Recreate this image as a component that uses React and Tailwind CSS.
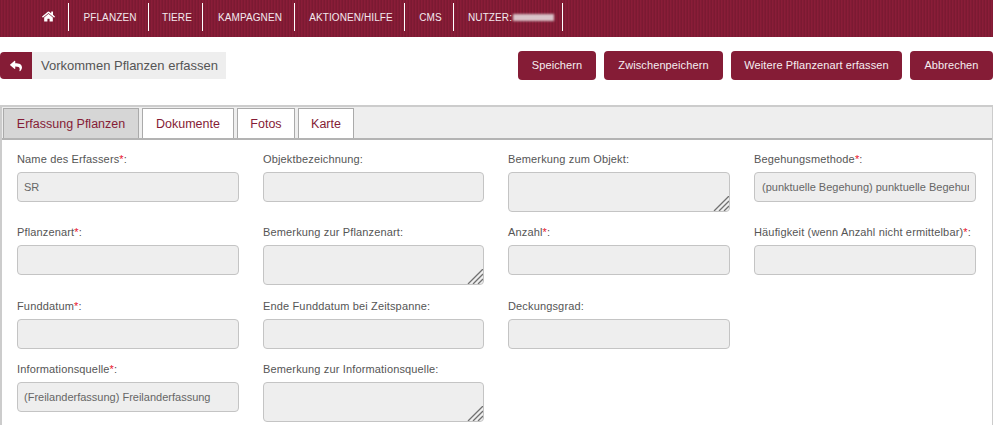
import { FaHome, FaReply } from 'react-icons/fa';

const navItems = [
  { label: 'PFLANZEN', width: 'w-[80px]' },
  { label: 'TIERE', width: 'w-[54px]' },
  { label: 'KAMPAGNEN', width: 'w-[92px]' },
  { label: 'AKTIONEN/HILFE', width: 'w-[110px]' },
  { label: 'CMS', width: 'w-[49px]' },
];

const buttons = [
  { label: 'Speichern', width: 'w-[78px]' },
  { label: 'Zwischenpeichern', width: 'w-[119px]' },
  { label: 'Weitere Pflanzenart erfassen', width: 'w-[171px]' },
  { label: 'Abbrechen', width: 'w-[83px]' },
];

const tabs = [
  { label: 'Erfassung Pflanzen', width: 'w-[136px]', active: true },
  { label: 'Dokumente', width: 'w-[92px]' },
  { label: 'Fotos', width: 'w-[58px]' },
  { label: 'Karte', width: 'w-[56px]' },
];

const fields = [
  { label: 'Name des Erfassers', required: true, value: 'SR' },
  { label: 'Objektbezeichnung' },
  { label: 'Bemerkung zum Objekt', multiline: true },
  { label: 'Begehungsmethode', required: true, value: '(punktuelle Begehung) punktuelle Begehung', inset: true },
  { label: 'Pflanzenart', required: true },
  { label: 'Bemerkung zur Pflanzenart', multiline: true },
  { label: 'Anzahl', required: true },
  { label: 'Häufigkeit (wenn Anzahl nicht ermittelbar)', required: true },
  { label: 'Funddatum', required: true },
  { label: 'Ende Funddatum bei Zeitspanne' },
  { label: 'Deckungsgrad' },
  null,
  { label: 'Informationsquelle', required: true, value: '(Freilanderfassung) Freilanderfassung' },
  { label: 'Bemerkung zur Informationsquelle', multiline: true },
];

function ResizeGrip() {
  return (
    <svg
      viewBox="0 0 16 15"
      className="pointer-events-none absolute bottom-[1px] right-[1px] h-[15px] w-[16px]"
      stroke="#707070"
      strokeWidth="1.3"
    >
      <path d="M1 15 16 0M6 15 16 5M11 15l5-5" />
    </svg>
  );
}

function Field({ field }) {
  if (!field) return <div />;
  const boxClass =
    'block w-full rounded-[4px] border border-[#c4c4c4] bg-[#eeeeee] text-[11px] text-[#666666] outline-none';

  return (
    <div>
      <label className="block h-[21px] whitespace-nowrap text-[11px] leading-[16px] tracking-[0.15px] text-[#555555]">
        {field.label}
        {field.required && <span className="text-[#e8112d]">*</span>}:
      </label>
      {field.multiline ? (
        <div className="relative">
          <textarea readOnly className={`${boxClass} h-[40px] resize-none px-[6px] py-[6px]`} />
          <ResizeGrip />
        </div>
      ) : (
        <input
          readOnly
          value={field.value || ''}
          className={`${boxClass} h-[30px] pr-[6px] ${field.inset ? 'pl-[7px]' : 'pl-[6px]'}`}
        />
      )}
    </div>
  );
}

export default function App() {
  return (
    <main className="h-[425px] overflow-hidden bg-white font-['Liberation_Sans',Arial,sans-serif]">
      <nav className="flex h-[37px] items-start bg-[repeating-linear-gradient(90deg,#7b1a32_0,#7b1a32_1px,#8a1d38_1px,#8a1d38_2px,#821b35_2px,#821b35_3px)] pl-[28px] pt-[3px] text-[10px] tracking-[0.1px] text-[#f3e9ee]">
        <div className="flex h-[28px] w-[41px] items-center justify-center border-r border-white pb-[1px] text-[13px] text-white">
          <FaHome />
        </div>
        {navItems.map((item) => (
          <a
            key={item.label}
            className={`flex h-[28px] items-center justify-center border-r border-white pl-[3px] ${item.width}`}
          >
            {item.label}
          </a>
        ))}
        <div className="flex h-[28px] w-[109px] items-center border-r border-white pl-[14px]">
          NUTZER:
          <span className="ml-[1px] h-[7px] w-[41px] bg-[#d9c3c9] blur-[1px]" />
        </div>
      </nav>

      <div className="flex h-[68px] items-start justify-between pt-[14px]">
        <div className="mt-[1px] flex h-[27px] items-stretch">
          <div className="flex w-[32px] items-center justify-center rounded-l-[4px] bg-[#851c36] text-[12px] text-white">
            <FaReply />
          </div>
          <div className="flex w-[194px] items-center whitespace-nowrap bg-[#eeeeee] pl-[9px] text-[13px] text-[#555555]">
            Vorkommen Pflanzen erfassen
          </div>
        </div>
        <div className="flex gap-[8px]">
          {buttons.map((button) => (
            <button
              key={button.label}
              type="button"
              className={`h-[29px] rounded-[4px] bg-[#851c36] text-[11px] tracking-[0.1px] text-[#f5eef1] ${button.width}`}
            >
              {button.label}
            </button>
          ))}
        </div>
      </div>

      <section className="h-[320px] border-t-2 border-l-2 border-r border-[#cccccc]">
        <div className="flex h-[33px] items-end gap-[3px] border-b-2 border-[#b3b3b3] bg-[#eeeeee] pl-[1px]">
          {tabs.map((tab) => (
            <button
              key={tab.label}
              type="button"
              className={`h-[30px] border border-b-0 border-[#aaaaaa] pt-[1px] text-[12.5px] text-[#851c36] ${tab.width} ${
                tab.active ? 'bg-[#d6d6d6]' : 'bg-white'
              }`}
            >
              {tab.label}
            </button>
          ))}
        </div>
        <div className="grid grid-cols-[222px_221px_222px_222px] gap-x-[24px] gap-y-[12.3px] pl-[15px] pt-[11px]">
          {fields.map((field, index) => (
            <Field key={field ? field.label : index} field={field} />
          ))}
        </div>
      </section>
    </main>
  );
}
